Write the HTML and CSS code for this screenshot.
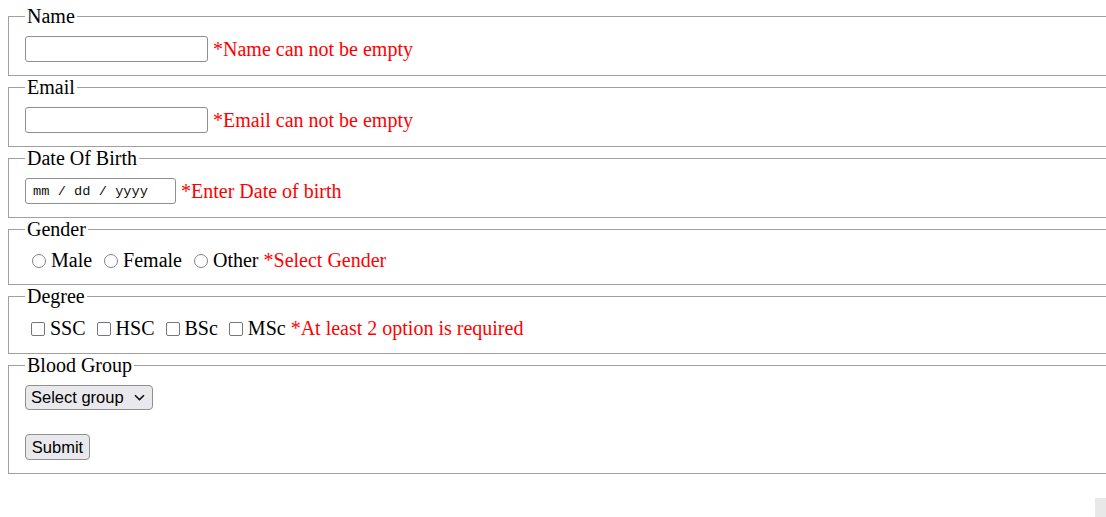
FILE: index.html
```html
<!DOCTYPE html>
<html lang="en">
<head>
<meta charset="utf-8">
<title>Form</title>
<link rel="stylesheet" href="styles.css">
</head>
<body>
<form class="form">
  <fieldset class="group">
    <legend class="group-title">Name</legend>
    <div class="row">
      <input class="text-input" type="text">
      <span class="err">*Name can not be empty</span>
    </div>
  </fieldset>
  <fieldset class="group">
    <legend class="group-title">Email</legend>
    <div class="row">
      <input class="text-input" type="text">
      <span class="err">*Email can not be empty</span>
    </div>
  </fieldset>
  <fieldset class="group">
    <legend class="group-title">Date Of Birth</legend>
    <div class="row">
      <span class="date-input">mm / dd / yyyy</span>
      <span class="err">*Enter Date of birth</span>
    </div>
  </fieldset>
  <fieldset class="group">
    <legend class="group-title">Gender</legend>
    <div class="line line-gender">
      <input class="radio" type="radio" name="gender">Male
      <input class="radio" type="radio" name="gender">Female
      <input class="radio" type="radio" name="gender">Other
      <span class="err">*Select Gender</span>
    </div>
  </fieldset>
  <fieldset class="group">
    <legend class="group-title">Degree</legend>
    <div class="line line-degree">
      <input class="check" type="checkbox">SSC
      <input class="check" type="checkbox">HSC
      <input class="check" type="checkbox">BSc
      <input class="check" type="checkbox">MSc
      <span class="err">*At least 2 option is required</span>
    </div>
  </fieldset>
  <fieldset class="group">
    <legend class="group-title">Blood Group</legend>
    <div class="select-row">
      <span class="select">
        <span class="select-text">Select group</span>
        <svg class="chev" width="11" height="7" viewBox="0 0 11 7"><path d="M1 1.2 L5.5 5.6 L10 1.2" fill="none" stroke="#111" stroke-width="1.6"/></svg>
      </span>
    </div>
    <div class="submit-row">
      <button class="btn" type="button">Submit</button>
    </div>
  </fieldset>
</form>
<div class="scroll-corner"></div>
</body>
</html>
```

FILE: styles.css
```css
html, body {
  background: #fff;
}
body {
  margin: 5px 0 0 8px;
  font-family: "Liberation Serif", "Times New Roman", serif;
  font-size: 20px;
  color: #000;
  overflow: hidden;
}
.form {
  margin: 0;
}
.group {
  margin: 0;
  border: 1px solid #a0a0a0;
  border-right: none;
  padding: 8px 0 13px 16px;
  min-width: 0;
}
.group-title {
  padding: 0 2px;
  line-height: 23px;
}
.row {
  display: flex;
  align-items: center;
  height: 26px;
}
.text-input {
  box-sizing: border-box;
  width: 183px;
  height: 26px;
  margin: 0;
  border: 1px solid #8f8f8f;
  border-radius: 3px;
  background: #fff;
  padding: 0 4px;
  font-size: 16px;
}
.date-input {
  box-sizing: border-box;
  display: inline-flex;
  align-items: center;
  width: 151px;
  height: 26px;
  border: 1px solid #8f8f8f;
  border-radius: 3px;
  padding: 1px 0 0 7px;
  font-family: "Liberation Mono", "Courier New", monospace;
  font-size: 13.7px;
  color: #111;
}
.err {
  color: #f00;
  margin-left: 5px;
  white-space: nowrap;
}
.line {
  white-space: nowrap;
}
.line-gender {
  line-height: 22px;
}
.line-degree {
  line-height: 24px;
}
.line .err {
  margin-left: 0;
}
.radio {
  -webkit-appearance: none;
  appearance: none;
  box-sizing: border-box;
  width: 14px;
  height: 14px;
  margin: 0 5px 0 7px;
  border: 1.6px solid #85858a;
  border-radius: 50%;
  background: #fff;
  vertical-align: -1px;
}
.check {
  -webkit-appearance: none;
  appearance: none;
  box-sizing: border-box;
  width: 14px;
  height: 14px;
  margin: 0 5px 0 6px;
  border: 1.6px solid #77777b;
  border-radius: 2px;
  background: #fff;
  vertical-align: -1px;
}
.select-row {
  display: flex;
}
.select {
  box-sizing: border-box;
  display: inline-flex;
  align-items: center;
  justify-content: space-between;
  width: 128px;
  height: 25px;
  padding: 0 7px 0 5px;
  border: 1px solid #8f8f8f;
  border-radius: 4px;
  background: #e9e9ed;
  font-family: "Liberation Sans", Arial, sans-serif;
  font-size: 16.5px;
  color: #000;
}
.chev {
  display: block;
}
.submit-row {
  display: flex;
  margin-top: 24px;
}
.btn {
  box-sizing: border-box;
  width: 65px;
  height: 26px;
  margin: 0;
  padding: 0;
  border: 1px solid #8f8f8f;
  border-radius: 4px;
  background: #e9e9ed;
  font-family: "Liberation Sans", Arial, sans-serif;
  font-size: 16.5px;
  color: #000;
}
.scroll-corner {
  position: fixed;
  right: 0;
  bottom: 0;
  width: 11px;
  height: 19px;
  background: #e8e8e8;
}
```
